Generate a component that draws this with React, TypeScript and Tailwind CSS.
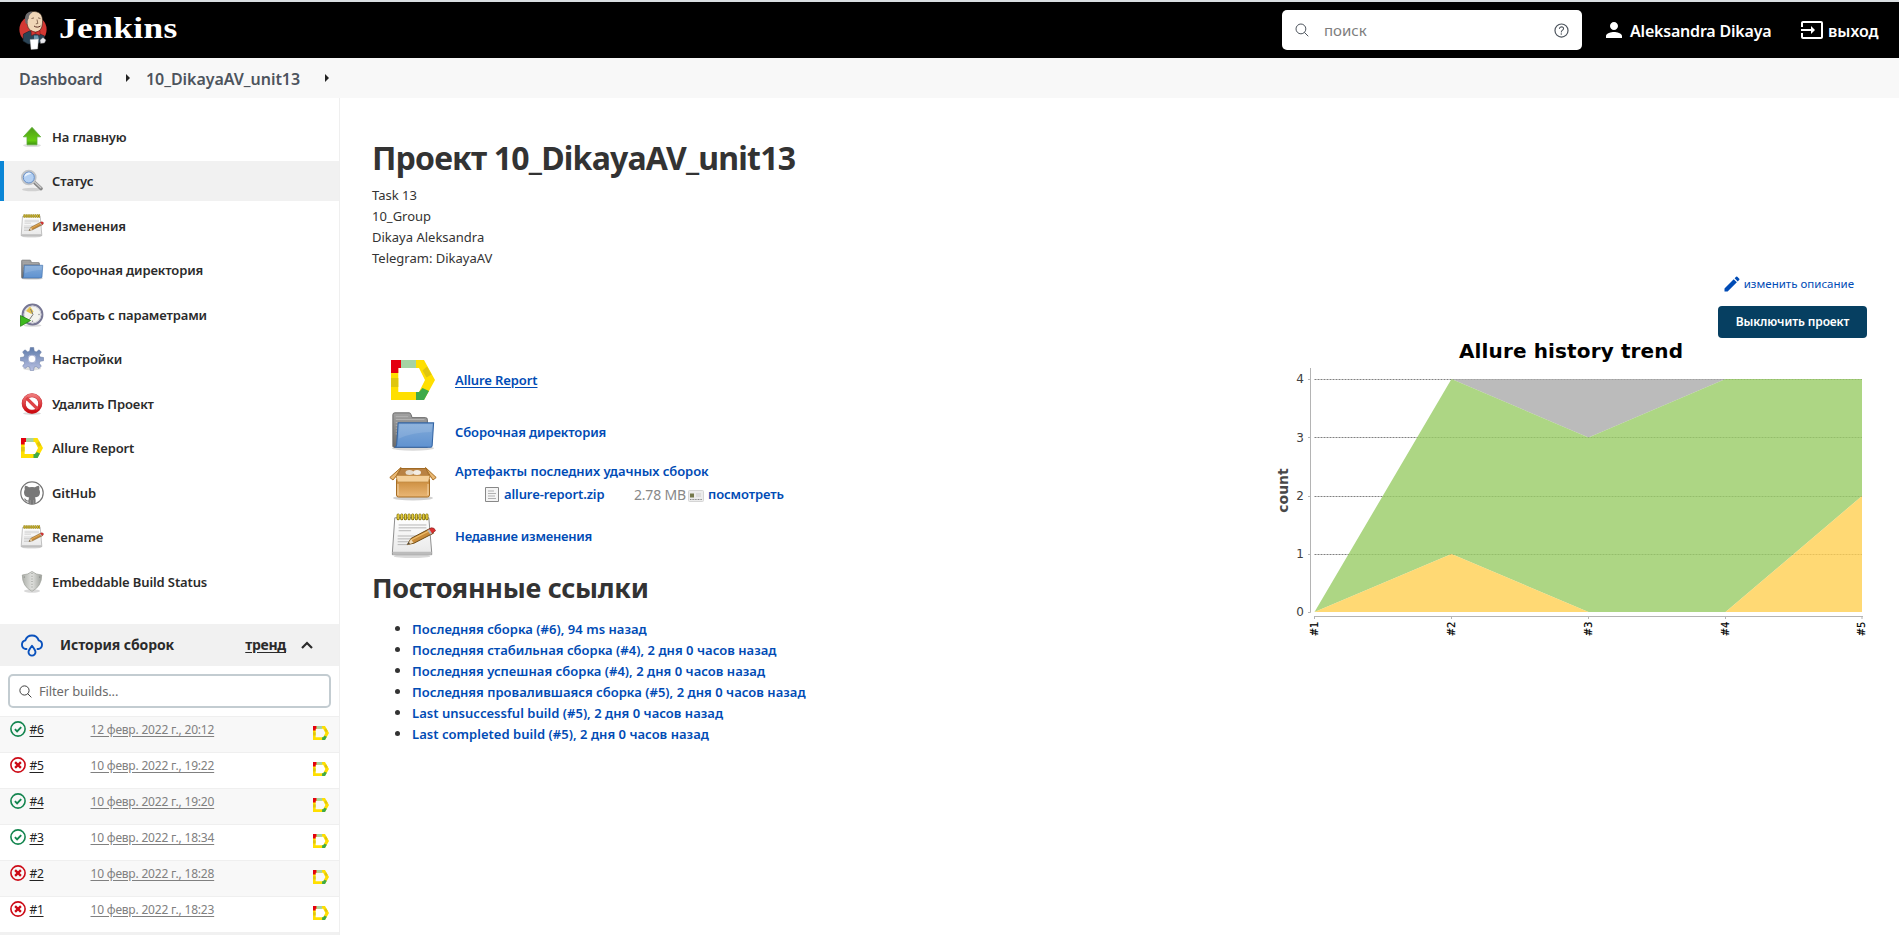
import React from "react";
import { MdPerson, MdInput, MdEdit } from "react-icons/md";
import { IoSearchOutline, IoHelpCircleOutline } from "react-icons/io5";

type IconProps = { className?: string };

const JenkinsHead = () => (
  <svg viewBox="0 0 28 40" className="h-10 w-7 shrink-0">
    <ellipse cx="14" cy="19.500" rx="13.600" ry="13.800" fill="#d33833" />
    <path d="M4.500 24l6-3 8 2 7 3-1 5-7 3H9l-5-3z" fill="#2b4456" stroke="#16222c" strokeWidth=".6" />
    <path d="M7.500 5C9.500 1.200 17 .2 21 3.500c3 2.700 2.800 8 2.200 11.500-.6 4-3 7-6.500 7-3 .3-6-1.500-7.500-4.500C7.900 15 7.500 9.500 7.500 5z" fill="#f0d6b7" stroke="#2a2018" strokeWidth=".6" />
    <path d="M12 1.500C8.500 1.800 6 5 6 8.500c0 2 .2 4 1 5.500l1.500-1c-.3-2 .5-3.500 1.300-4.500C9.500 6 10.500 4 13.500 2.200z" fill="#6d6b6d" />
    <path d="M12.500 8.500l2.500-.6M19 7.800l2.500.8M18 9.500l.8 4-2 .4" stroke="#7a5c48" strokeWidth=".9" fill="none" />
    <path d="M15 16c2 1.500 4.500 1.500 6.500 0" stroke="#5a2f24" strokeWidth="1" fill="none" />
    <path d="M12 20.500l4.500 2 4.500-2v4.800l-4.500-1.600-4 1.800z" fill="#d33833" stroke="#7b1310" strokeWidth=".5" />
    <path d="M15 25.500h4l1 4h-5z" fill="#6d97ad" />
    <path d="M11 29.500l8.500-.5-.8 10-6.700.6z" fill="#fff" stroke="#999" strokeWidth=".4" />
    <path d="M21 30l3-2.500 3 2.500-1.500 3-4 .5z" fill="#e9e9ee" stroke="#555" strokeWidth=".4" />
  </svg>
);

const Allure = ({ className }: IconProps) => (
  <svg viewBox="0 0 44 40" preserveAspectRatio="none" className={className}>
    <path fillRule="evenodd" d="M0 0h33l11 20-11 20H0zM7.300 8v24h20.700l6-12-6-12z" fill="#ffdf00" />
    <path d="M0 0h10v8H7.300v5H0z" fill="#e4000f" />
    <path d="M10 0h15v8H10z" fill="#a6d3a3" />
    <path d="M0 18h7.300v9H0z" fill="#dfc60f" />
    <path d="M36 6.500l4.500 8-5 3-4-7z" fill="#dfc60f" />
    <path d="M25 32h3l3.500-4 6.500 3-5 9h-8z" fill="#3eaa49" />
  </svg>
);

const Folder = ({ className }: IconProps) => (
  <svg viewBox="0 0 48 48" className={className}>
    <defs>
      <linearGradient id="fg" x1="0" y1="0" x2="0" y2="1"><stop offset="0" stopColor="#83abd9" /><stop offset="1" stopColor="#5f92d0" /></linearGradient>
      <linearGradient id="fb" x1="0" y1="0" x2="0" y2="1"><stop offset="0" stopColor="#a2a2a2" /><stop offset="1" stopColor="#6a6a6a" /></linearGradient>
    </defs>
    <ellipse cx="24" cy="41" rx="22" ry="2.500" fill="#000" opacity=".15" />
    <path d="M3 39V6q0-2 2-2h15q1.500 0 2 2l1 3h14q2 0 2 2V40H4z" fill="url(#fb)" stroke="#666" />
    <path d="M6 8h13M6 11h30M6 14h2M6 17h2M6 20h2M6 23h2M6 26h2" stroke="#bbb" strokeWidth=".8" />
    <path d="M8.500 14.500h37L44 38q0 2-2 2H5q2-1 2-3z" fill="url(#fg)" stroke="#3465a4" strokeWidth="1.100" />
    <path d="M10 16h34l-.7 8Q24 24 9 31z" fill="#fff" opacity=".12" />
  </svg>
);

const Notepad = ({ className }: IconProps) => (
  <svg viewBox="0 0 48 48" className={className}>
    <defs>
      <linearGradient id="np" x1="0" y1="0" x2="0" y2="1"><stop offset="0" stopColor="#fff" /><stop offset="1" stopColor="#e8e8e8" /></linearGradient>
    </defs>
    <ellipse cx="23" cy="45" rx="19" ry="2" fill="#000" opacity=".15" />
    <path d="M5 5h35.500l3 36v2.500H2.500V41z" fill="url(#np)" stroke="#8a8a8a" />
    <path d="M3 40.500h40v3H3z" fill="#bcbcbc" />
    <path d="M9 12.500h29M9 15.500h29M9 18.500h13M8 24h19M8 27h17M8 30h15M8 33h10" stroke="#b4b4b4" />
    <path d="M8.500 2v4M12.300 2v4M16.100 2v4M19.900 2v4M23.700 2v4M27.500 2v4M31.300 2v4M35.100 2v4M38.500 2v4" stroke="#7b6a00" strokeWidth="3.200" strokeLinecap="round" />
    <path d="M8.500 2v4M12.300 2v4M16.100 2v4M19.900 2v4M23.700 2v4M27.500 2v4M31.300 2v4M35.100 2v4M38.500 2v4" stroke="#e3cb3c" strokeWidth="1.700" strokeLinecap="round" />
    <path d="M18 33l4-6.500L42 16l3.500 5L25 31.500z" fill="#c98c3a" stroke="#6d4a14" />
    <path d="M21.500 28.500l19.500-10" stroke="#f0bf6c" strokeWidth="1.200" />
    <path d="M40 17.500l3-2q3.500-.5 4.500 3l-4.500 3.500z" fill="#dc3030" stroke="#8b2525" strokeWidth=".7" />
    <path d="M39 18l2-1 3 4.500-2 1z" fill="#b9b9b9" />
    <path d="M18 33l4-5.500 2.500 3.500z" fill="#f0dcb8" />
    <path d="M18 33l1.700-2.500 1.200 1.400z" fill="#333" />
  </svg>
);

const Package = ({ className }: IconProps) => (
  <svg viewBox="0 0 48 36" className={className}>
    <defs>
      <linearGradient id="pk" x1="0" y1="0" x2="0" y2="1"><stop offset="0" stopColor="#c98a3a" /><stop offset="1" stopColor="#eab775" /></linearGradient>
    </defs>
    <ellipse cx="24" cy="32" rx="20" ry="2.500" fill="#000" opacity=".18" />
    <path d="M12 2.500h25l4 9H7z" fill="#b98243" stroke="#a06a25" />
    <ellipse cx="20.500" cy="6.500" rx="4" ry="2.500" fill="#e6dccd" />
    <ellipse cx="28" cy="6.500" rx="4" ry="2.500" fill="#f3ede4" />
    <path d="M7.500 13h33v16q0 2-2 2h-29q-2 0-2-2z" fill="url(#pk)" stroke="#a66c22" />
    <path d="M7 9.500h34l-1.500 6.500H8.500z" fill="#f4cf98" stroke="#c08a42" strokeWidth=".8" />
    <path d="M12 1.500L7.500 9.500l-3.500 4.500L.8 11.500z" fill="#e9b873" stroke="#a66c22" />
    <path d="M36.500 1.500L41 9.500l3 4.500 3.200-2.500z" fill="#e9b873" stroke="#a66c22" />
    <path d="M9 18v11M39 18v11" stroke="#fbe3bc" strokeWidth=".8" />
  </svg>
);

const UpArrow = ({ className }: IconProps) => (
  <svg viewBox="0 0 24 24" className={className}>
    <defs><linearGradient id="ua" x1="0" y1="0" x2="0" y2="1"><stop offset="0" stopColor="#4d9a18" /><stop offset=".75" stopColor="#66cc10" /><stop offset="1" stopColor="#3e9311" /></linearGradient></defs>
    <ellipse cx="12" cy="20.500" rx="9" ry="1.600" fill="#000" opacity=".13" />
    <path d="M12 2.300l8.700 9.500h-3.700v8H7v-8H3.300z" fill="url(#ua)" stroke="#5fae3a" strokeWidth=".8" />
  </svg>
);

const Magnifier = ({ className }: IconProps) => (
  <svg viewBox="0 0 24 24" className={className}>
    <ellipse cx="12" cy="20.500" rx="10" ry="1.700" fill="#000" opacity=".13" />
    <path d="M14.500 13.500l6.500 6" stroke="#858585" strokeWidth="3.600" strokeLinecap="round" />
    <path d="M15 13.300l5.800 5.400" stroke="#c9c9c9" strokeWidth="1.500" strokeLinecap="round" />
    <circle cx="8.800" cy="8.500" r="6.800" fill="#a9c8ee" stroke="#c2c4c6" strokeWidth="2" />
    <circle cx="8.800" cy="8.500" r="5.500" fill="#b3d0f3" stroke="#6a90c6" />
    <path d="M4.500 8a4.300 4.300 0 0 1 7-3.500Q6.500 6 4.500 8z" fill="#e8f2fd" />
  </svg>
);

const ClockIcon = ({ className }: IconProps) => (
  <svg viewBox="0 0 24 24" className={className}>
    <ellipse cx="12.500" cy="22.500" rx="9" ry="1.300" fill="#000" opacity=".15" />
    <circle cx="12.500" cy="11.500" r="9.900" fill="#f3f3ee" stroke="#777794" strokeWidth="2" />
    <circle cx="12.500" cy="11.500" r="8.400" fill="none" stroke="#c4c4d0" strokeWidth=".8" />
    <path d="M6 8L10 3.500l3.500 5-2 2.500z" fill="#e3c24d" />
    <path d="M10.500 6l2.500 5.500-3.500 5" fill="none" stroke="#777" strokeWidth="1" />
    <circle cx="19" cy="11.500" r=".7" fill="#888" /><circle cx="12.500" cy="18.300" r=".7" fill="#888" />
    <path d="M.5 12.500L10.500 17.500.5 23.300z" fill="#3db91e" stroke="#24820f" strokeWidth=".8" />
  </svg>
);

const Gear = ({ className }: IconProps) => (
  <svg viewBox="0 0 24 24" className={className}>
    <defs><linearGradient id="ge" x1="0" y1="0" x2="0" y2="1"><stop offset="0" stopColor="#5f7cab" /><stop offset="1" stopColor="#b9c0e2" /></linearGradient></defs>
    <ellipse cx="12" cy="21.500" rx="9" ry="1.800" fill="#000" opacity=".13" />
    <path fillRule="evenodd" d="M10.300.5h3.400l.5 3.600 2 .8 2.900-2.100 2.300 2.300-2.100 2.900.8 2 3.500.5v3.200l-3.500.6-.8 2 2 2.800-2.300 2.400-2.900-2.100-1.900.8-.6 3.400h-3.300l-.6-3.400-1.900-.8-2.900 2.100-2.300-2.400 2-2.800-.8-2-3.400-.6v-3.200l3.400-.5.8-2-2-2.900 2.300-2.300 2.900 2.100 1.900-.8zM12 8a4 4 0 1 0 0 8 4 4 0 0 0 0-8z" fill="url(#ge)" stroke="#65779f" strokeWidth=".5" />
    <circle cx="12" cy="12" r="3.900" fill="#fff" stroke="#a3aed2" strokeWidth="1" />
  </svg>
);

const NoEntry = ({ className }: IconProps) => (
  <svg viewBox="0 0 24 24" className={className}>
    <defs><linearGradient id="ne" x1="0" y1="0" x2="0" y2="1"><stop offset="0" stopColor="#ee7777" /><stop offset="1" stopColor="#cc0a10" /></linearGradient></defs>
    <ellipse cx="12" cy="21.500" rx="9" ry="1.500" fill="#000" opacity=".15" />
    <circle cx="12" cy="11.500" r="8.300" fill="#fff" stroke="#c4303a" strokeWidth="4" />
    <circle cx="12" cy="11.500" r="8.300" fill="none" stroke="url(#ne)" strokeWidth="3.200" />
    <path d="M6.300 5.800l11.400 11.400" stroke="#df4347" strokeWidth="3.300" />
  </svg>
);

const GitHubMark = ({ className }: IconProps) => (
  <svg viewBox="0 0 24 24" className={className}>
    <circle cx="12" cy="12" r="11.200" fill="#fff" stroke="#757575" strokeWidth="1.200" />
    <path d="M5 4.800Q7 4.500 9 6.300q3-.6 6 0Q17 4.500 19 4.800q.8 2 .2 3.700.9 1.300.8 3.200-.3 4.300-5.200 4.900.8.900.8 2.400v3.600q-3.600 1.200-7.200 0v-2.200q-2.500.5-3.300-1.200-.5-1-1.300-1.500 1.500-.4 2.400 1.100.8 1.100 2.300.6.100-1.800.7-2.800-4.900-.6-5.200-4.900 0-1.900.8-3.200Q4.200 6.800 5 4.800z" fill="#787878" />
    <path d="M10.300 19v4M13.600 19v4" stroke="#aaa" strokeWidth=".5" />
  </svg>
);

const Shield = ({ className }: IconProps) => (
  <svg viewBox="0 0 24 24" className={className}>
    <defs><linearGradient id="sh" x1="0" y1="0" x2="1" y2="0"><stop offset="0" stopColor="#adb0aa" /><stop offset=".5" stopColor="#e0e1de" /><stop offset="1" stopColor="#9ea19b" /></linearGradient></defs>
    <ellipse cx="12" cy="21" rx="8" ry="1.800" fill="#000" opacity=".15" />
    <path d="M12 1.500Q8 4.800 2.300 5q0 11.500 9.700 16.300Q21.700 16.500 21.700 5 16 4.800 12 1.500z" fill="url(#sh)" stroke="#a0a29c" strokeWidth=".8" />
    <path d="M12 3v16.500" stroke="#9c9e99" strokeWidth="1.200" strokeDasharray="1 1.700" />
    <circle cx="4.300" cy="7" r=".6" fill="#777" /><circle cx="19.700" cy="7" r=".6" fill="#777" />
  </svg>
);

const CloudDrop = () => (
  <svg viewBox="0 0 24 24" className="h-6 w-6" fill="none" stroke="#0b52bd" strokeWidth="1.900" strokeLinecap="round" strokeLinejoin="round">
    <path d="M6.500 16H5.600A4.400 4.400 0 0 1 5.300 7.400 7 7 0 0 1 18.700 7.400a4.400 4.400 0 0 1-.3 8.600h-.9" />
    <path d="M12 12.800q-3.500 4.300-3.500 6.300a3.500 3.500 0 0 0 7 0q0-2-3.500-6.300z" />
  </svg>
);

const StatusIcon = ({ ok }: { ok: boolean }) => (
  <svg viewBox="0 0 16 16" className="h-4 w-4 shrink-0" fill="none" stroke={ok ? "#13854f" : "#cc0a16"}>
    <circle cx="8" cy="8" r="7.100" strokeWidth="1.600" />
    {ok ? <path d="M4.900 8.200l2.200 2.200 4.100-4.300" strokeWidth="1.900" /> : <path d="M5.100 5.100l5.800 5.800M10.900 5.100l-5.800 5.800" strokeWidth="2.300" />}
  </svg>
);

const Caret = ({ className }: IconProps) => (
  <svg viewBox="0 0 4 8" className={`h-2 w-1 ${className}`}><path d="M0 0l4 4-4 4z" fill="#222" /></svg>
);

const menu = [
  { label: "На главную", icon: <UpArrow className="h-6 w-6" /> },
  { label: "Статус", icon: <Magnifier className="h-6 w-6" />, active: true },
  { label: "Изменения", icon: <Notepad className="h-6 w-6" /> },
  { label: "Сборочная директория", icon: <Folder className="h-6 w-6" /> },
  { label: "Собрать с параметрами", icon: <ClockIcon className="h-6 w-6" /> },
  { label: "Настройки", icon: <Gear className="h-6 w-6" /> },
  { label: "Удалить Проект", icon: <NoEntry className="h-6 w-6" /> },
  { label: "Allure Report", icon: <Allure className="mx-px h-5 w-[22px]" /> },
  { label: "GitHub", icon: <GitHubMark className="h-6 w-6" /> },
  { label: "Rename", icon: <Notepad className="h-6 w-6" /> },
  { label: "Embeddable Build Status", icon: <Shield className="h-6 w-6" /> },
];

const builds = [
  { n: "#6", ok: true, date: "12 февр. 2022 г., 20:12" },
  { n: "#5", ok: false, date: "10 февр. 2022 г., 19:22" },
  { n: "#4", ok: true, date: "10 февр. 2022 г., 19:20" },
  { n: "#3", ok: true, date: "10 февр. 2022 г., 18:34" },
  { n: "#2", ok: false, date: "10 февр. 2022 г., 18:28" },
  { n: "#1", ok: false, date: "10 февр. 2022 г., 18:23" },
];

const permalinks = [
  "Последняя сборка (#6), 94 ms назад",
  "Последняя стабильная сборка (#4), 2 дня 0 часов назад",
  "Последняя успешная сборка (#4), 2 дня 0 часов назад",
  "Последняя провалившаяся сборка (#5), 2 дня 0 часов назад",
  "Last unsuccessful build (#5), 2 дня 0 часов назад",
  "Last completed build (#5), 2 дня 0 часов назад",
];

function Header() {
  return (
    <header className="flex h-[58px] items-center border-t-2 border-[#d9dee1] bg-black pl-[19px] pr-[20px] text-white">
      <JenkinsHead />
      <span className="-mt-1 ml-[12px] w-[140px] origin-left scale-x-[1.22] font-['Liberation_Serif',serif] text-[29px] font-bold leading-none tracking-[0.3px]">Jenkins</span>
      <div className="ml-auto flex h-10 w-[300px] items-center rounded-[5px] bg-white pl-3 pr-[11px]">
        <IoSearchOutline className="h-4 w-4 text-[#4d545d]" />
        <span className="ml-[14px] text-[15px] text-[#7d7d7d]">поиск</span>
        <IoHelpCircleOutline className="ml-auto h-[19px] w-[19px] text-[#4d545d]" />
      </div>
      <MdPerson className="ml-[20px] h-6 w-6" />
      <span className="ml-[4px] w-[142px] whitespace-nowrap pt-px text-[16px] font-semibold tracking-[-0.2px]">Aleksandra Dikaya</span>
      <MdInput className="ml-[28px] h-6 w-6" />
      <span className="ml-[4px] w-[51px] whitespace-nowrap pt-px text-[16px] font-semibold">выход</span>
    </header>
  );
}

function Sidebar() {
  return (
    <aside className="flex h-[837px] w-[340px] shrink-0 flex-col border-r border-[#efefef]">
      <nav className="flex h-[526px] flex-col gap-[4.5px] pt-[18.5px]">
        {menu.map((m) => (
          <a key={m.label} className={m.active ? "flex h-10 shrink-0 items-center border-l-4 border-[#0b86d6] bg-[#f1f1f1] pl-4" : "flex h-10 shrink-0 items-center pl-5"}>
            {m.icon}
            <span className="ml-2 pt-[2px] text-[13px] font-semibold tracking-[-0.12px] text-[#2b2b2b]">{m.label}</span>
          </a>
        ))}
      </nav>
      <div className="flex h-[42px] shrink-0 items-center bg-[#f1f1f1] pb-px pl-5 pr-[26px] text-[14px] font-bold text-[#2b2b2b]">
        <CloudDrop />
        <span className="ml-4 tracking-[-0.1px]">История сборок</span>
        <span className="ml-auto tracking-[-0.3px] underline underline-offset-2">тренд</span>
        <svg viewBox="0 0 12 8" className="ml-[15px] h-2 w-3" fill="none" stroke="#2b2b2b" strokeWidth="2.200"><path d="M1 7l5-5 5 5" /></svg>
      </div>
      <div className="mx-2 mb-2 mt-2 flex h-[34px] shrink-0 items-center rounded-[5px] border-2 border-[#c3ccd1] pl-2">
        <IoSearchOutline className="h-[15px] w-[15px] text-[#333]" />
        <span className="ml-[6px] pt-px text-[13px] tracking-[-0.15px] text-[#6b6b6b]">Filter builds...</span>
      </div>
      {builds.map((b, i) => (
        <div key={b.n} className={i % 2 ? "flex h-9 shrink-0 border-t border-[#efefef] pl-[10px]" : "flex h-9 shrink-0 border-t border-[#efefef] bg-[#f8f8f8] pl-[10px]"}>
          <span className="pt-1"><StatusIcon ok={b.ok} /></span>
          <span className="ml-[3.5px] w-[61px] pt-1 text-[12px] leading-[18px] tracking-[-0.3px] text-[#222] underline underline-offset-2">{b.n}</span>
          <span className="pt-1 text-[12px] leading-[18px] tracking-[-0.2px] text-[#808080] underline underline-offset-2">{b.date}</span>
          <Allure className="ml-auto mr-[10px] mt-[9px] h-[14px] w-4" />
        </div>
      ))}
      <div className="h-[3px] bg-[#f1f1f1]" />
    </aside>
  );
}

const X = [44.5, 181.5, 318.5, 455.5, 592];
const Y = [274, 216, 158, 99.5, 41];

function TrendChart() {
  const area = (pts: [number, number][]) => pts.map(([i, v]) => `${X[i]},${Y[v]}`).join(" ");
  return (
    <svg viewBox="0 0 600 310" className="h-[310px] w-[600px] font-['DejaVu_Sans',sans-serif]">
      <text x="301" y="20" textAnchor="middle" fontSize="20" fontWeight="700" fill="#000" textLength="224">Allure history trend</text>
      {Y.slice(1).map((y) => <path key={y} d={`M44.500 ${Math.floor(y)}.5H592`} stroke="#808080" strokeDasharray="2 1" />)}
      <g fillOpacity=".8">
        <polygon points={area([[1, 4], [3, 4], [2, 3]])} fill="#aaaaaa" />
        <polygon points={area([[0, 0], [1, 4], [2, 3], [3, 4], [4, 4], [4, 2], [3, 0], [2, 0], [1, 1]])} fill="#99cc65" />
        <polygon points={area([[0, 0], [1, 1], [2, 0]])} fill="#ffd051" />
        <polygon points={area([[3, 0], [4, 2], [4, 0]])} fill="#ffd051" />
      </g>
      <path d="M40.500 30v244.500M44 278.500h549" stroke="#b4b4b4" fill="none" />
      {Y.map((y, i) => (
        <g key={i}>
          <path d={`M38 ${Math.floor(y)}.5h2.500`} stroke="#b4b4b4" />
          <text x="34" y={y + 4.300} textAnchor="end" fontSize="12" fill="#404040">{i}</text>
        </g>
      ))}
      {X.map((x, i) => (
        <g key={i}>
          <path d={`M${x} 279v2`} stroke="#b4b4b4" />
          <text transform={`translate(${x + 3} 283.500) rotate(-90)`} textAnchor="end" fontSize="10" fill="#000" stroke="#000" strokeWidth=".2">#{i + 1}</text>
        </g>
      ))}
      <text transform="translate(18 152.500) rotate(-90)" textAnchor="middle" fontSize="14" fontWeight="700" fill="#484848">count</text>
    </svg>
  );
}

function Main() {
  const link = "text-[13px] font-semibold leading-[21px] text-[#004bb5]";
  return (
    <main className="flex flex-1 pl-[32px]">
      <section className="w-[600px] pt-[37px] text-[#333]">
        <h1 className="whitespace-nowrap text-[32px] font-bold leading-[46px] tracking-[-0.8px]">Проект 10_DikayaAV_unit13</h1>
        <div className="pt-[4px] text-[13px] leading-[21px]">
          <p>Task 13</p>
          <p>10_Group</p>
          <p>Dikaya Aleksandra</p>
          <p>Telegram: DikayaAV</p>
        </div>
        <div className="pl-[17px] pt-[85px]">
          <div className="flex h-[52px] items-center">
            <Allure className="ml-[2px] h-10 w-11" />
            <a className={`${link} ml-5 tracking-[-0.1px] underline underline-offset-2`}>Allure Report</a>
          </div>
          <div className="flex h-[52px] items-center">
            <Folder className="mr-[18px] h-12 w-12 p-[1px]" />
            <a className={`${link} tracking-[-0.12px]`}>Сборочная директория</a>
          </div>
          <div className="flex h-[51px] items-center">
            <Package className="mr-[18px] h-9 w-12" />
            <div className="pt-px">
              <a className={`${link} block tracking-[-0.06px]`}>Артефакты последних удачных сборок</a>
              <div className="flex h-[25px] items-center pl-[30px]">
                <svg viewBox="0 0 14 15" className="h-[15px] w-[14px]"><path d="M.5.5h13v14H.5z" fill="#f4f4f4" stroke="#888" /><path d="M3 4h6M3 6.500h8M3 9h7M3 11.500h8" stroke="#b0b0b0" /></svg>
                <a className={`${link} ml-[5px] w-[130px] tracking-[-0.1px]`}>allure-report.zip</a>
                <span className="w-[54px] whitespace-nowrap text-[14px] tracking-[-0.2px] text-[#888]">2.78 MB</span>
                <svg viewBox="0 0 16 12" className="mt-[2px] h-3 w-4"><rect x=".5" y=".5" width="15" height="11" rx="1" fill="#ececec" stroke="#d5d5d5" /><path d="M2 3.500h4v4H2z" fill="#74784a" /><path d="M8 4h5M8 6h5" stroke="#ccc" /><path d="M2 9.500h12" stroke="#888" strokeDasharray="1 .6" /></svg>
                <a className={`${link} ml-1 tracking-[-0.1px]`}>посмотреть</a>
              </div>
            </div>
          </div>
          <div className="flex h-[54px] items-center">
            <Notepad className="mr-[18px] h-12 w-12 p-[1px]" />
            <a className={`${link} tracking-[-0.25px]`}>Недавние изменения</a>
          </div>
        </div>
        <h2 className="whitespace-nowrap pt-[5px] text-[27px] font-bold leading-[40px] tracking-[-0.3px]">Постоянные ссылки</h2>
        <ul className="pt-[11px]">
          {permalinks.map((p) => (
            <li key={p} className="flex h-[21px] items-center pl-[23px]">
              <span className="mb-[2px] mr-[12px] h-[5px] w-[5px] rounded-full bg-[#333]" />
              <a className={`${link} whitespace-nowrap tracking-[0.03px]`}>{p}</a>
            </li>
          ))}
        </ul>
      </section>
      <aside className="ml-auto flex w-[629px] flex-col pt-[174px]">
        <a className="flex h-6 items-center justify-end pr-[45px] text-[11.5px] text-[#004bb5]">
          <MdEdit className="mr-[2px] h-5 w-5" />
          изменить описание
        </a>
        <button className="ml-auto mr-8 mt-[10px] h-8 w-[149px] rounded-[4px] bg-[#063f61] text-[12px] font-semibold tracking-[-0.1px] text-white">Выключить проект</button>
        <TrendChart />
      </aside>
    </main>
  );
}

export default function App() {
  return (
    <div className="h-[935px] w-[1899px] overflow-hidden bg-white font-['Noto_Sans','Open_Sans',sans-serif]">
      <Header />
      <div className="flex h-10 items-center bg-[#f8f8f8] pl-[19px] text-[16px] font-semibold text-[#4d545d]">
        <span className="w-[84px] pt-px tracking-[-0.2px]">Dashboard</span>
        <Caret className="ml-[23px]" />
        <span className="ml-[16px] w-[155px] pt-px tracking-[-0.05px]">10_DikayaAV_unit13</span>
        <Caret className="ml-[24px]" />
      </div>
      <div className="flex">
        <Sidebar />
        <Main />
      </div>
    </div>
  );
}
